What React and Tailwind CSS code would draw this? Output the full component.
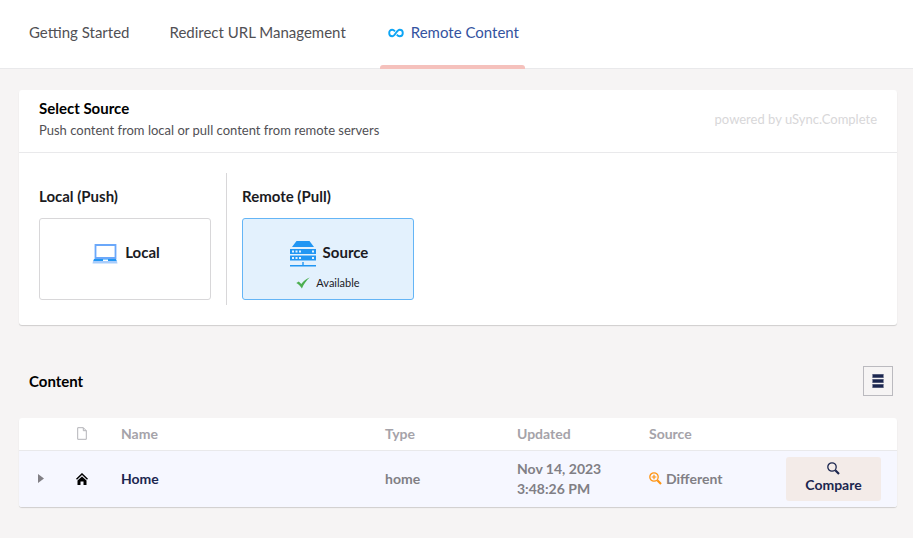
import React from "react";

function InfinityIcon() {
  return (
    <svg viewBox="0 0 16 10" className="h-[10px] w-4" fill="none" stroke="#0ea5f5" strokeWidth="1.9" aria-hidden="true">
      <path d="M7 3.300C6 2.200 5.200 1.700 4.200 1.700 2.400 1.700 1.200 3 1.200 5s1.200 3.300 3 3.300C7.200 8.300 8.600 1.700 11.600 1.700c1.900 0 3.200 1.300 3.200 3.300s-1.300 3.300-3.200 3.300c-1 0-1.900-.5-2.800-1.600" />
    </svg>
  );
}

function LaptopIcon() {
  return (
    <svg viewBox="0 0 26 20" className="h-5 w-[26px]" aria-hidden="true">
      <path d="M3.500 1h20v13h-20z" fill="none" stroke="#6ba8fa" strokeWidth="1.800" />
      <path d="M2 15h22l.8 2H1.200z" fill="#2196f3" />
      <path d="M1 17h24l.5 2.500H.5z" fill="#a9cdfb" />
      <path d="M11 15.500h5v1.500h-5z" fill="#fff" />
    </svg>
  );
}

function ServerIcon() {
  return (
    <svg viewBox="0 0 26 26" className="h-[26px] w-[26px]" fill="#2196f3" aria-hidden="true">
      <path d="M6.500 0h13L24 6H2z" />
      <path d="M0 8h26v5H0zM0 14.500h26v5H0zM12.300 21h1.400v3h-1.400zM0 24h26v1.500H0z" />
      <g fill="#e3f1fd">
        <path d="M2 9.600h2v2H2zM5.500 9.600h2v2h-2zM9 9.600h2v2H9zM22 9.600h2v2h-2z" />
        <path d="M2 16h2v2H2zM5.500 16h2v2h-2zM9 16h2v2H9zM22 16h2v2h-2z" />
      </g>
    </svg>
  );
}

function CheckIcon() {
  return (
    <svg viewBox="0 0 14 12" className="h-3 w-[14px]" fill="#4caf50" aria-hidden="true">
      <path d="M.3 6 2.800 4.600 5.300 7C7.400 4.200 9.900 2 13.700.4 10.400 3.400 7.800 7 5.900 11.400 4.300 9.200 2.600 7.300.3 6z" />
    </svg>
  );
}

function SearchIcon({ plus, className }) {
  return (
    <svg viewBox="0 0 13 13" className={className} fill="none" stroke="currentColor" aria-hidden="true">
      <circle cx="5" cy="5" r="4.200" strokeWidth="1.300" />
      {plus && <path d="M5 2.700v4.600M2.700 5h4.600" strokeWidth="1.200" />}
      <path d="m8.300 8.300 3.700 3.700" strokeWidth="2.200" />
    </svg>
  );
}

function DocumentIcon() {
  return (
    <svg viewBox="0 0 10 13" className="mx-auto block h-[13px] w-[10px]" fill="none" stroke="#b3b3b8" aria-hidden="true">
      <path d="M.7.7h5.600l3 3v8.600H.7zM6.300.7v3h3" />
    </svg>
  );
}

function HomeIcon() {
  return (
    <svg viewBox="0 0 12 12" className="mx-auto block h-3 w-3" aria-hidden="true">
      <path d="M.5 6.200 6 1l5.500 5.200" fill="none" stroke="#000" strokeWidth="1.500" />
      <path d="M6 3.400 10.500 7.500V12h-3V8.500h-3V12h-3V7.500z" fill="#000" />
    </svg>
  );
}

function ListIcon() {
  return (
    <svg viewBox="0 0 12 14" className="h-[14px] w-3" aria-hidden="true">
      <path d="M0 0h12v4H0zM0 5h12v4H0zM0 10h12v4H0z" fill="#1b264f" opacity="0.5" />
      <path d="M1 .5h10v3H1zM1 5.500h10v3H1zM1 10.500h10v3H1z" fill="#1b264f" />
    </svg>
  );
}

function Tab({ active, children }) {
  return (
    <button
      type="button"
      role="tab"
      aria-selected={Boolean(active)}
      className={`relative flex h-full items-center px-[6px] pb-1 ${active ? "text-[#3453a0]" : "text-[#515054]"}`}
    >
      {children}
      {active && <span className="absolute inset-x-0 -bottom-px h-1 rounded-t-[3px] bg-[#f5c1bc]" />}
    </button>
  );
}

function SourceCard({ selected, icon, name, status }) {
  return (
    <button
      type="button"
      aria-pressed={Boolean(selected)}
      className={`flex h-[82px] w-[172px] flex-col items-center rounded-[3px] border pt-5 font-bold text-[#1b1b1f] ${
        selected ? "border-[#64b5f6] bg-[#e3f1fd]" : "border-[#d8d7d9]"
      }`}
    >
      <span className="flex h-7 gap-[7px] pl-[2px]">
        <span className="flex items-center pt-[2px]">{icon}</span>
        <span className="leading-[26px]">{name}</span>
      </span>
      {status && (
        <span className="mt-[6px] flex items-center gap-[6px] text-[11px] leading-5 font-normal">
          <CheckIcon />
          {status}
        </span>
      )}
    </button>
  );
}

const cardShadow = "rounded-[3px] bg-white shadow-[0_1px_1px_0_rgba(0,0,0,0.16)]";

export default function App() {
  return (
    <div className="min-h-screen bg-[#f6f4f4] font-['Lato',sans-serif] text-[15px] leading-5 text-black">
      <header className="border-b border-[#e9e9eb] bg-white">
        <div role="tablist" className="flex h-[68px] gap-7 px-[23px]">
          <Tab>Getting Started</Tab>
          <Tab>Redirect URL Management</Tab>
          <Tab active>
            <span className="flex items-center gap-[7px] pl-[2px]">
              <span className="pt-[2px]">
                <InfinityIcon />
              </span>
              Remote Content
            </span>
          </Tab>
        </div>
      </header>

      <main className="px-4 pt-[21px] pb-7 pl-[19px]">
        <section className={cardShadow}>
          <div className="flex items-center justify-between border-b border-[#e9e9eb] px-5 pt-2 pb-3">
            <div className="flex flex-col gap-[2px]">
              <h2 className="font-bold">Select Source</h2>
              <p className="text-[13px] text-[#515054]">Push content from local or pull content from remote servers</p>
            </div>
            <small className="text-[13px] text-[#d8d7d9]">powered by uSync.Complete</small>
          </div>
          <div className="flex p-5">
            <div className="border-r border-[#d8d7d9] pt-[13px] pr-[15px] pb-[5px]">
              <h3 className="mb-3 font-bold text-[#1b1b1f]">Local (Push)</h3>
              <SourceCard icon={<LaptopIcon />} name="Local" />
            </div>
            <div className="pt-[13px] pl-[15px]">
              <h3 className="mb-3 font-bold text-[#1b1b1f]">Remote (Pull)</h3>
              <SourceCard selected icon={<ServerIcon />} name="Source" status="Available" />
            </div>
          </div>
        </section>

        <div className="mt-[41px] flex items-center justify-between pr-1 pl-[10px]">
          <h2 className="font-bold">Content</h2>
          <button type="button" aria-label="List view" className="flex h-[30px] w-[30px] items-center justify-center border border-[#bbbabf]">
            <ListIcon />
          </button>
        </div>

        <div className={`mt-[22px] overflow-hidden ${cardShadow}`}>
          <table className="w-full table-fixed border-collapse text-left text-[14px] font-bold text-[#817f85]">
            <colgroup>
              <col className="w-11" />
              <col className="w-[38px]" />
              <col />
              <col className="w-[132px]" />
              <col className="w-[132px]" />
              <col className="w-[132px]" />
              <col className="w-[136px]" />
            </colgroup>
            <thead>
              <tr className="h-8 border-b border-[#e9e9eb] text-[#a5a3a9]">
                <th />
                <th><DocumentIcon /></th>
                <th className="pl-5">Name</th>
                <th className="pl-5">Type</th>
                <th className="pl-5">Updated</th>
                <th className="pl-5">Source</th>
                <th />
              </tr>
            </thead>
            <tbody>
              <tr className="h-[57px] bg-[#f6f7ff]">
                <td>
                  <button type="button" aria-label="Expand Home" className="mx-auto block">
                    <svg viewBox="0 0 6 9" className="h-[9px] w-[6px]" fill="#817f85" aria-hidden="true">
                      <path d="M0 0 6 4.500 0 9z" />
                    </svg>
                  </button>
                </td>
                <td><HomeIcon /></td>
                <td className="pl-5 text-[#1b264f]">Home</td>
                <td className="pl-5">home</td>
                <td className="pl-5">Nov 14, 2023<br />3:48:26 PM</td>
                <td className="pl-5">
                  <span className="flex items-center gap-1">
                    <SearchIcon plus className="h-[13px] w-[13px] text-[#ff9412]" />
                    Different
                  </span>
                </td>
                <td className="pr-4 pl-[25px]">
                  <button type="button" className="flex h-11 w-full flex-col items-center justify-center rounded-[3px] bg-[#f3ebe8] text-[#1b264f]">
                    <SearchIcon className="h-[13px] w-[13px]" />
                    Compare
                  </button>
                </td>
              </tr>
            </tbody>
          </table>
        </div>
      </main>
    </div>
  );
}
